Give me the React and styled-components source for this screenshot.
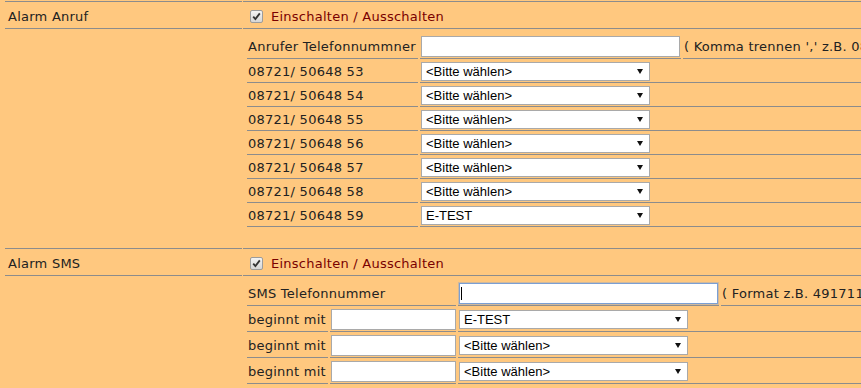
import React from 'react'
import styled, { createGlobalStyle } from 'styled-components'

const GlobalStyle = createGlobalStyle`
    html, body {
        margin: 0;
        padding: 0;
        background: #ffc87f;
        overflow: hidden;
    }
    body {
        font-family: "DejaVu Sans", Verdana, sans-serif;
        font-size: 13px;
        letter-spacing: 0.25px;
        color: #222;
    }
`

const Page = styled.div`
    width: 1100px;
    padding-left: 5px;
    display: grid;
    grid-template-columns: 237px 1fr;
    column-gap: 1px;
    row-gap: 2px;
`

const Cell = styled.div`
    border-bottom: 1px solid #8c8c8c;
    min-height: ${p => p.$h ?? 0}px;
    display: flex;
    align-items: center;
    padding-left: ${p => p.$pl ?? 0}px;
`

const BlockCell = styled.div`
    border-bottom: 1px solid #8c8c8c;
    padding: 4px 0 21px 4px;
`

const Checkbox = styled.span`
    width: 11px;
    height: 11px;
    margin: 0 8px 0 7px;
    border: 1px solid #9c9c9c;
    border-radius: 2px;
    background: linear-gradient(#f4f4f4, #d6d6d6);
    display: inline-flex;
    align-items: center;
    justify-content: center;
`

const SwitchText = styled.span`
    color: #7a0000;
`

const Nested = styled.div`
    display: grid;
    grid-template-columns: ${p => p.$cols};
    column-gap: 2px;
    row-gap: 2px;
`

const NCell = styled.div`
    border-bottom: 1px solid #8c8c8c;
    padding: 1px;
    display: flex;
    align-items: center;
    white-space: nowrap;
    grid-column: ${p => p.$span || 'auto'};
`

const TextInput = styled.input`
    box-sizing: border-box;
    width: ${p => p.$w}px;
    height: 21px;
    margin: 0;
    padding: 0 2px;
    border: 1px solid ${p => (p.$focus ? '#7a9fd4' : '#a9a9a9')};
    box-shadow: ${p => (p.$focus ? '0 0 0 1px rgba(122, 159, 212, 0.35)' : 'none')};
    background: #fff;
    font: 13px "Liberation Sans", Arial, sans-serif;
    letter-spacing: normal;
    outline: none;
`

const Caret = styled.span`
    position: relative;
    display: inline-block;

    &::after {
        content: '';
        position: absolute;
        left: 2px;
        top: 4px;
        width: 1px;
        height: 13px;
        background: #000;
    }
`

const SelectWrap = styled.span`
    position: relative;
    display: inline-block;
    line-height: 0;

    &::after {
        content: '';
        position: absolute;
        right: 7px;
        top: 7px;
        border-left: 3px solid transparent;
        border-right: 3px solid transparent;
        border-top: 5px solid #111;
        pointer-events: none;
    }
`

const Select = styled.select`
    appearance: none;
    box-sizing: border-box;
    width: 229px;
    height: 19px;
    margin: 0;
    padding: 0 0 0 4px;
    border: 1px solid #a9a9a9;
    border-radius: 0;
    background: #fff;
    color: #000;
    font: 13px "Liberation Sans", Arial, sans-serif;
    letter-spacing: normal;
`

const PLEASE = '<Bitte wählen>'

function Dropdown({ value }) {
  return (
    <SelectWrap>
      <Select defaultValue={value}>
        <option value={PLEASE}>{PLEASE}</option>
        <option value="E-TEST">E-TEST</option>
      </Select>
    </SelectWrap>
  )
}

function Switch() {
  return (
    <Cell $h={24}>
      <Checkbox>
        <svg width="9" height="9" viewBox="0 0 9 9">
          <path d="M1.2 4.6 L3.4 7 L7.8 1.4" fill="none" stroke="#333" strokeWidth="1.8" />
        </svg>
      </Checkbox>
      <SwitchText>Einschalten / Ausschalten</SwitchText>
    </Cell>
  )
}

const callRows = [
  ['08721/ 50648 53', PLEASE],
  ['08721/ 50648 54', PLEASE],
  ['08721/ 50648 55', PLEASE],
  ['08721/ 50648 56', PLEASE],
  ['08721/ 50648 57', PLEASE],
  ['08721/ 50648 58', PLEASE],
  ['08721/ 50648 59', 'E-TEST'],
]

const smsRows = ['E-TEST', PLEASE, PLEASE]

export default function App() {
  return (
    <>
      <GlobalStyle />
      <Page>
        <Cell $h={1} />
        <Cell $h={1} />

        <Cell $h={24} $pl={3}>Alarm Anruf</Cell>
        <Switch />

        <Cell />
        <BlockCell>
          <Nested $cols="171px 261px 1fr">
            <NCell>Anrufer Telefonnummner</NCell>
            <NCell><TextInput $w={259} /></NCell>
            <NCell>( Komma trennen ',' z.B. 08721/50648</NCell>
            {callRows.map(([label, value]) => (
              <React.Fragment key={label}>
                <NCell>{label}</NCell>
                <NCell $span="2 / 4"><Dropdown value={value} /></NCell>
              </React.Fragment>
            ))}
          </Nested>
        </BlockCell>

        <Cell $h={24} $pl={3}>Alarm SMS</Cell>
        <Switch />

        <Cell />
        <BlockCell>
          <Nested $cols="81px 126px 261px 1fr">
            <NCell $span="1 / 3">SMS Telefonnummer</NCell>
            <NCell><Caret><TextInput $w={259} $focus /></Caret></NCell>
            <NCell>( Format z.B. 4917112345678 )</NCell>
            {smsRows.map((value, i) => (
              <React.Fragment key={i}>
                <NCell>beginnt mit</NCell>
                <NCell><TextInput $w={125} /></NCell>
                <NCell $span="3 / 5"><Dropdown value={value} /></NCell>
              </React.Fragment>
            ))}
          </Nested>
        </BlockCell>
      </Page>
    </>
  )
}
